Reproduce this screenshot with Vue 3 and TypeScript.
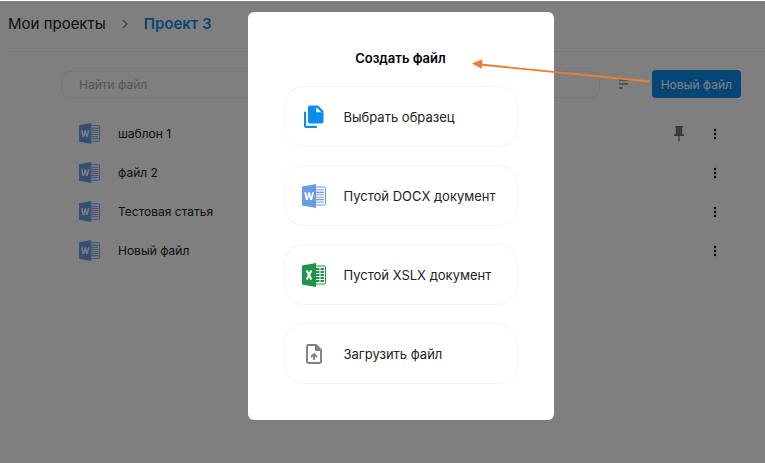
<script setup lang="ts">
import { ref } from 'vue'

interface FileItem {
  name: string
  pinned: boolean
}

type OptionIcon = 'copy' | 'word' | 'excel' | 'upload'

interface CreateOption {
  icon: OptionIcon
  label: string
}

const query = ref('')

const files: FileItem[] = [
  { name: 'шаблон 1', pinned: true },
  { name: 'файл 2', pinned: false },
  { name: 'Тестовая статья', pinned: false },
  { name: 'Новый файл', pinned: false },
]

const options: CreateOption[] = [
  { icon: 'copy', label: 'Выбрать образец' },
  { icon: 'word', label: 'Пустой DOCX документ' },
  { icon: 'excel', label: 'Пустой XSLX документ' },
  { icon: 'upload', label: 'Загрузить файл' },
]
</script>

<template>
  <div class="page">
    <header class="header">
      <nav class="crumbs" aria-label="Навигация">
        <a class="crumb" href="#">Мои проекты</a>
        <svg class="chevron" viewBox="0 0 8 10" aria-hidden="true">
          <path d="M2 1l4 4-4 4" fill="none" stroke="#777" stroke-width="1.1" />
        </svg>
        <a class="crumb current" href="#" aria-current="page">Проект 3</a>
      </nav>
    </header>

    <main class="content">
      <div class="toolbar">
        <input v-model="query" class="search" type="search" placeholder="Найти файл" aria-label="Найти файл" />
        <button class="icon-button sort" type="button" aria-label="Сортировка">
          <svg viewBox="0 0 24 24" width="24" height="24" aria-hidden="true">
            <path d="M7 8h10M7 12h9M7 16h4" fill="none" stroke="#888" stroke-width="1.6" />
          </svg>
        </button>
        <button class="new-file" type="button">Новый файл</button>
      </div>

      <ul class="files">
        <li v-for="file in files" :key="file.name" class="file">
          <svg class="file-icon" viewBox="0 0 24 24" aria-hidden="true">
            <rect x="13" y="3" width="10.5" height="18" rx="1" fill="#fff" stroke="#6c9ce6" />
            <path d="M14 6h8M14 8.4h8M14 10.8h8M14 13.2h8M14 15.6h8M14 18h8" stroke="#6c9ce6" stroke-width="1.1" />
            <path d="M0 2.5L14 0v24L0 21.500z" fill="#6c9ce6" />
            <path d="M2.200 8.200h1.900l1 5 1.300-5h1.500l1.200 5 1-5H12l-2 7.800H8.100L7 11.500 5.900 16H4z" fill="#fff" />
          </svg>
          <span class="file-name">{{ file.name }}</span>
          <svg v-if="file.pinned" class="pin" viewBox="0 0 12 16" role="img" aria-label="Закреплено">
            <path d="M2 0h8v1.500H9.200V7.400l1.800 1.400V10H6.600v5.500H5.400V10H1V8.800l1.800-1.400V1.500H2z" fill="#777" />
          </svg>
          <button class="icon-button menu" type="button" :aria-label="`Действия: ${file.name}`">
            <svg viewBox="0 0 4 14" width="4" height="14" aria-hidden="true">
              <circle cx="2" cy="3" r="1.2" />
              <circle cx="2" cy="7" r="1.2" />
              <circle cx="2" cy="11" r="1.2" />
            </svg>
          </button>
        </li>
      </ul>
    </main>

    <div class="overlay">
      <section class="dialog" role="dialog" aria-modal="true" aria-labelledby="dialog-title">
        <h2 id="dialog-title" class="title">Создать файл</h2>
        <button v-for="option in options" :key="option.icon" class="option" type="button">
          <svg class="option-icon" viewBox="0 0 24 24" aria-hidden="true">
            <g v-if="option.icon === 'copy'" fill="#0d8cec">
              <path d="M8 .5h8l5.500 5.500v10.500a2 2 0 0 1-2 2H8a2 2 0 0 1-2-2v-14a2 2 0 0 1 2-2zM14.300 2.300v5h5z" fill-rule="evenodd" />
              <path d="M2 7.500a1 1 0 0 1 2 0v13.300h10a1 1 0 0 1 0 2.200H4a2 2 0 0 1-2-2z" />
            </g>
            <g v-else-if="option.icon === 'word'">
              <rect x="13" y="3" width="10.5" height="18" rx="1" fill="#fff" stroke="#6c9ce6" />
              <path d="M14 6h8M14 8.4h8M14 10.8h8M14 13.2h8M14 15.6h8M14 18h8" stroke="#6c9ce6" stroke-width="1.1" />
              <path d="M0 2.5L14 0v24L0 21.500z" fill="#6c9ce6" />
              <path d="M2.200 8.200h1.900l1 5 1.300-5h1.500l1.200 5 1-5H12l-2 7.800H8.100L7 11.500 5.900 16H4z" fill="#fff" />
            </g>
            <g v-else-if="option.icon === 'excel'">
              <rect x="13" y="3" width="10.5" height="18" rx="1" fill="#fff" stroke="#1e964a" />
              <path d="M14 5h3.500v2H14zM18.500 5H22v2h-3.500zM14 8h3.500v2H14zM18.500 8H22v2h-3.500zM14 11h3.500v2H14zM18.500 11H22v2h-3.500zM14 14h3.500v2H14zM18.500 14H22v2h-3.500zM14 17h3.500v2H14zM18.500 17H22v2h-3.500z" fill="#1e964a" />
              <path d="M0 2.500L14 0v24L0 21.500z" fill="#1e964a" />
              <path d="M4.700 7.500l4.600 9M9.300 7.500l-4.600 9" fill="none" stroke="#fff" stroke-width="2" />
            </g>
            <g v-else fill="none" stroke="#808080" stroke-width="1.9">
              <path d="M6.500 3H14l5 5v11.500a1.500 1.500 0 0 1-1.500 1.500h-11A1.500 1.500 0 0 1 5 19.500v-15A1.500 1.500 0 0 1 6.500 3z" />
              <path d="M13.500 3v5.500H19z" fill="#808080" stroke-width="1" />
              <path d="M12 18v-5.500M9 15l3-3 3 3" />
            </g>
          </svg>
          <span>{{ option.label }}</span>
        </button>
      </section>
    </div>

    <svg class="arrow" viewBox="0 0 178 24" aria-hidden="true">
      <path d="M8 5.500L178 22.500" fill="none" stroke="#ed7d31" stroke-width="1.8" />
      <path d="M0 4.500L10.500 0.300L9.700 9.800z" fill="#ed7d31" />
    </svg>
  </div>
</template>

<style>
body {
  margin: 0;
  background: #fff;
}
</style>

<style scoped>
.page {
  position: relative;
  min-height: 100vh;
  box-sizing: border-box;
  font-family: Inter, 'Liberation Sans', sans-serif;
  font-size: 13px;
  color: #222;
}

button {
  font: inherit;
  cursor: pointer;
}

.header {
  margin-left: 8px;
  border-bottom: 1px solid #eee;
}

.crumbs {
  display: flex;
  align-items: center;
  gap: 15px;
  padding: 12px 0 15px;
  font-size: 15px;
  line-height: 24px;
}

.crumb {
  color: #222;
  text-decoration: none;
}

.current {
  color: #0d8cec;
  font-weight: 600;
}

.chevron {
  width: 8px;
  height: 10px;
}

.content {
  padding: 18px 24px 0 61px;
}

.toolbar {
  display: flex;
  align-items: center;
}

.search {
  flex: 1;
  min-width: 0;
  height: 27px;
  box-sizing: border-box;
  padding: 0 17px;
  border: 1px solid #eee;
  border-radius: 9px;
  background: #fff;
  font: inherit;
  font-size: 12px;
  color: #222;
  outline: none;
  appearance: none;
}

.search::placeholder {
  color: #aaa;
  opacity: 1;
}

.icon-button {
  display: flex;
  align-items: center;
  justify-content: center;
  padding: 0;
  border: 0;
  background: none;
}

.sort {
  margin: 0 16px 0 12px;
}

.new-file {
  height: 28px;
  padding: 0 9px;
  border: 0;
  border-radius: 4px;
  background: #0d8cec;
  color: #fff;
  font-size: 12px;
}

.files {
  margin: 0;
  padding: 16px 16px 0 18px;
  list-style: none;
}

.file {
  display: flex;
  align-items: center;
  height: 39px;
}

.file-icon {
  width: 21px;
  height: 21px;
}

.file-name {
  flex: 1;
  margin-left: 18px;
  font-size: 12px;
}

.pin {
  width: 12px;
  height: 16px;
  margin-right: 20px;
}

.menu {
  width: 20px;
  height: 20px;
}

.overlay {
  position: absolute;
  inset: 1px 0 0;
  display: flex;
  align-items: flex-start;
  justify-content: center;
  padding: 11px 0 0 36px;
  background: rgba(0, 0, 0, 0.5);
}

.dialog {
  display: flex;
  flex-direction: column;
  gap: 18px;
  min-width: 234px;
  padding: 36px;
  border-radius: 6px;
  background: #fff;
}

.title {
  margin: 0;
  font-size: 13px;
  font-weight: 600;
  line-height: 20px;
  text-align: center;
  color: #000;
}

.option {
  display: flex;
  align-items: center;
  gap: 18px;
  min-height: 61px;
  padding: 0 17px;
  border: 1px solid #f0f5fa;
  border-radius: 20px;
  background: #fff;
  font-size: 13px;
  text-align: left;
  color: #222;
}

.option-icon {
  flex: none;
  width: 24px;
  height: 24px;
}

.arrow {
  position: absolute;
  top: 59px;
  right: 115px;
  width: 178px;
  height: 24px;
  pointer-events: none;
}
</style>
